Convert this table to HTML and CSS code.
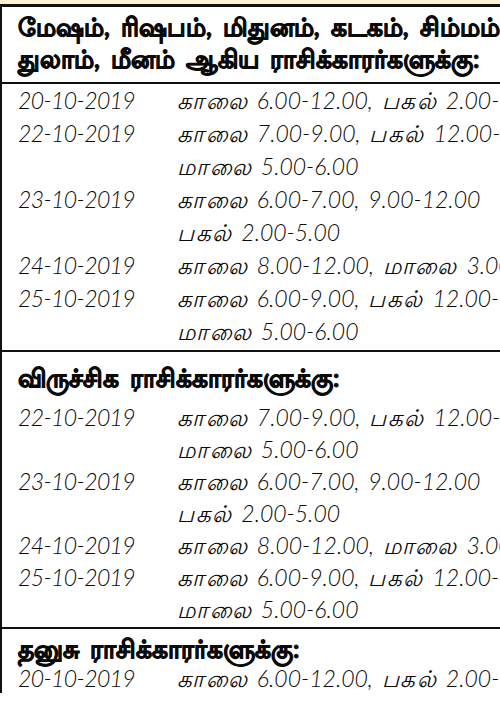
FILE: index.html
```html
<!DOCTYPE html>
<html lang="ta">
<head>
<meta charset="utf-8">
<title>ராசிக்காரர்களுக்கு</title>
<link rel="stylesheet" href="styles.css">
</head>
<body>
<div class="strip"></div>
<div class="table">
  <section class="group g1">
    <h2 class="head">மேஷம், ரிஷபம், மிதுனம், கடகம், சிம்மம், <br>துலாம், மீனம் ஆகிய ராசிக்காரர்களுக்கு:</h2>
    <div class="rows">
      <div class="d">20-10-2019</div><div class="t"><span class="ta">காலை</span> 6.00-12.00, <span class="ta">பகல்</span> 2.00-5.00</div>
      <div class="d">22-10-2019</div><div class="t"><span class="ta">காலை</span> 7.00-9.00, <span class="ta">பகல்</span> 12.00-1.00<br><span class="ta">மாலை</span> 5.00-6.00</div>
      <div class="d">23-10-2019</div><div class="t"><span class="ta">காலை</span> 6.00-7.00, 9.00-12.00<br><span class="ta">பகல்</span> 2.00-5.00</div>
      <div class="d">24-10-2019</div><div class="t"><span class="ta">காலை</span> 8.00-12.00, <span class="ta">மாலை</span> 3.00-6.00</div>
      <div class="d">25-10-2019</div><div class="t"><span class="ta">காலை</span> 6.00-9.00, <span class="ta">பகல்</span> 12.00-1.00<br><span class="ta">மாலை</span> 5.00-6.00</div>
    </div>
  </section>
  <section class="group g2">
    <h2 class="head">விருச்சிக ராசிக்காரர்களுக்கு:</h2>
    <div class="rows">
      <div class="d">22-10-2019</div><div class="t"><span class="ta">காலை</span> 7.00-9.00, <span class="ta">பகல்</span> 12.00-1.00<br><span class="ta">மாலை</span> 5.00-6.00</div>
      <div class="d">23-10-2019</div><div class="t"><span class="ta">காலை</span> 6.00-7.00, 9.00-12.00<br><span class="ta">பகல்</span> 2.00-5.00</div>
      <div class="d">24-10-2019</div><div class="t"><span class="ta">காலை</span> 8.00-12.00, <span class="ta">மாலை</span> 3.00-6.00</div>
      <div class="d">25-10-2019</div><div class="t"><span class="ta">காலை</span> 6.00-9.00, <span class="ta">பகல்</span> 12.00-1.00<br><span class="ta">மாலை</span> 5.00-6.00</div>
    </div>
  </section>
  <section class="group g3">
    <h2 class="head">தனுசு ராசிக்காரர்களுக்கு:</h2>
    <div class="rows">
      <div class="d">20-10-2019</div><div class="t"><span class="ta">காலை</span> 6.00-12.00, <span class="ta">பகல்</span> 2.00-5.00</div>
    </div>
  </section>
</div>
</body>
</html>
```

FILE: styles.css
```css
html, body {
  margin: 0;
  padding: 0;
  background: #ffffff;
}
body {
  width: 500px;
  height: 702px;
  overflow: hidden;
  color: #0a0a0a;
  font-family: "Lato", "Noto Sans", sans-serif;
}
.strip {
  height: 4px;
  background: #fbf3d3;
}
.table {
  width: 760px;
  border-top: 3px solid #111111;
  border-left: 2px solid #111111;
}
.group {
  border-bottom: 2px solid #111111;
}
.head {
  margin: 0;
  padding-left: 16px;
  font-size: 25px;
  font-weight: 700;
  line-height: 32px;
  word-spacing: 5px;
  white-space: nowrap;
  -webkit-text-stroke: 0.9px #0a0a0a;
}
.g1 .head {
  padding-top: 3px;
  padding-bottom: 8px;
  border-bottom: 2px solid #111111;
}
.g1 .rows {
  padding-bottom: 2px;
}
.g2 .head {
  padding-top: 9px;
  padding-bottom: 7px;
  line-height: 33px;
}
.g2 .rows {
  padding-bottom: 2px;
  line-height: 32px;
}
.g3 {
  border-bottom: none;
}
.g3 .head {
  padding-top: 4px;
  line-height: 30px;
}
.g3 .rows {
  line-height: 30px;
}
.rows {
  display: grid;
  grid-template-columns: 159px 1fr;
  padding-left: 16px;
  font-style: italic;
  font-weight: 300;
  font-size: 23px;
  line-height: 33px;
  white-space: nowrap;
}
.d {
  letter-spacing: -0.6px;
}
.t {
  word-spacing: 3px;
}
.ta {
  letter-spacing: 1.5px;
}
```
